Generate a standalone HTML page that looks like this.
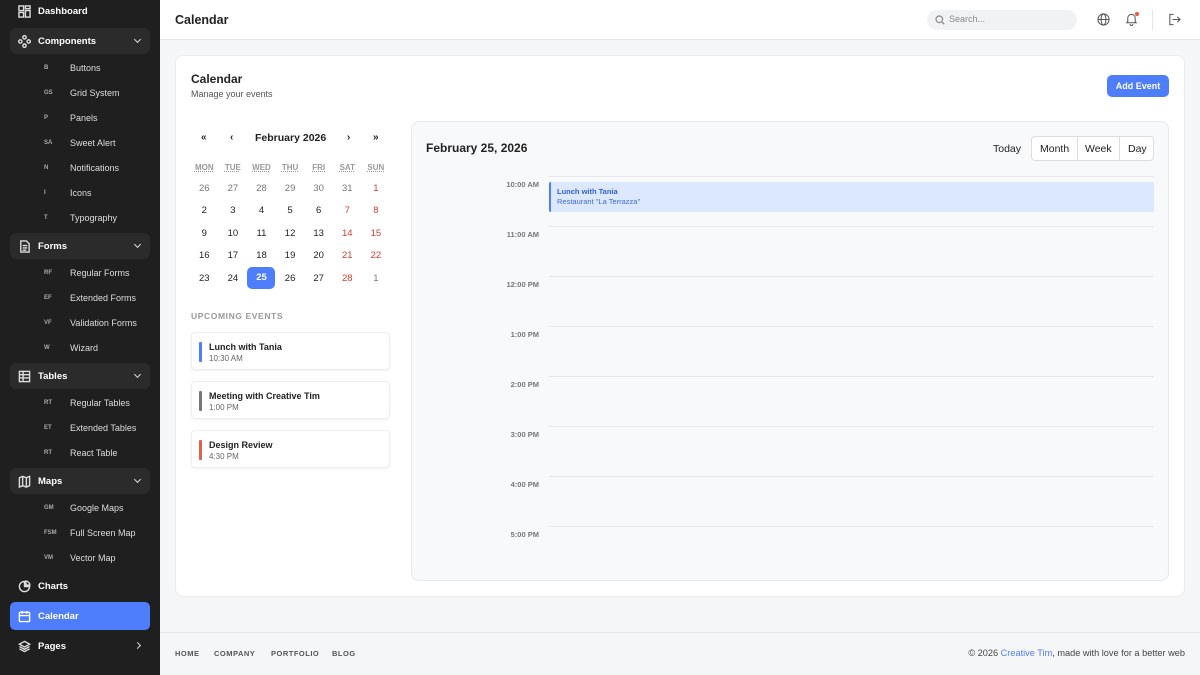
<!DOCTYPE html>
<html><head><meta charset="utf-8"><style>
*{box-sizing:border-box;margin:0;padding:0}
body{width:1200px;height:675px;overflow:hidden;font-family:"Liberation Sans",sans-serif;background:#f5f6f8;position:relative;color:#222}
.a{position:absolute}
#sb{left:0;top:0;width:160px;height:675px;background:#1f1f1f;color:#fff}
.it{position:absolute;left:10px;width:140px;height:26px;font-size:9.5px;font-weight:bold;display:flex;align-items:center;padding-left:8px}
.it svg{width:13px;height:13px;margin-right:7px;stroke:#ddd;fill:none;stroke-width:1.5}
.grp{background:#2b2b2b;border-radius:6px}
.chev{position:absolute;right:10px;top:9px;width:5px;height:5px;border-right:1.3px solid #ddd;border-bottom:1.3px solid #ddd;transform:rotate(45deg)}
.sub{position:absolute;left:0;width:160px;font-size:9px;color:#ddd;height:14px;line-height:14px}
.sub b{position:absolute;left:44px;top:0;line-height:14px;font-size:6px;color:#aaa;width:20px}
.sub span{position:absolute;left:70px;top:0;white-space:nowrap}
#top{left:160px;top:0;width:1040px;height:40px;background:#fff;border-bottom:1px solid #e6e6e6}
.card{left:175px;top:55px;width:1010px;height:542px;background:#fff;border-radius:8px;border:1px solid #ececec}
.cal td{width:28.6px;height:22.5px;text-align:center;font-size:9.5px;color:#222}
.cal th{font-size:8px;color:#999;font-weight:bold;height:20px;text-decoration:underline dotted;}
.cal td.r{color:#d93b2a}.cal td.g{color:#777}
.ev{position:absolute;left:191px;width:199px;height:38px;border:1px solid #eee;border-radius:4px;background:#fff;box-shadow:0 1px 2px rgba(0,0,0,.06)}
.ev i{position:absolute;left:7px;top:9px;width:3px;height:20px;border-radius:1px}
.ev b{position:absolute;left:17px;top:9px;font-size:9px;color:#222}
.ev span{position:absolute;left:17px;top:21px;font-size:8px;color:#666}
.hl{position:absolute;left:549px;width:605px;height:1px;background:#e6e7ea}
.tl{position:absolute;left:470px;width:69px;text-align:right;font-size:7.5px;color:#777;font-weight:bold}
.ft{font-size:7.5px;color:#555;font-weight:bold;letter-spacing:.5px;top:649px}
</style></head><body>
<div id="sb" class="a">
<div class="it" style="top:0;height:22px"><svg viewBox="0 0 14 14"><rect x="1" y="1" width="5" height="5"/><rect x="8" y="1" width="5" height="3"/><rect x="1" y="8" width="5" height="5" /><rect x="8" y="6" width="5" height="7"/></svg>Dashboard</div>
<div class="it grp" style="top:28px"><svg viewBox="0 0 14 14"><circle cx="7" cy="2.5" r="1.8"/><circle cx="2.5" cy="7" r="1.8"/><circle cx="11.5" cy="7" r="1.8"/><circle cx="7" cy="11.5" r="1.8"/></svg>Components<i class="chev"></i></div>
<div class="sub" style="top:61px"><b>B</b><span>Buttons</span></div>
<div class="sub" style="top:86px"><b>GS</b><span>Grid System</span></div>
<div class="sub" style="top:111px"><b>P</b><span>Panels</span></div>
<div class="sub" style="top:136px"><b>SA</b><span>Sweet Alert</span></div>
<div class="sub" style="top:161px"><b>N</b><span>Notifications</span></div>
<div class="sub" style="top:186px"><b>I</b><span>Icons</span></div>
<div class="sub" style="top:211px"><b>T</b><span>Typography</span></div>
<div class="it grp" style="top:233px"><svg viewBox="0 0 14 14"><path d="M3 1h6l3 3v9H3z M5 6h5M5 8.5h5M5 11h4"/></svg>Forms<i class="chev"></i></div>
<div class="sub" style="top:266px"><b>RF</b><span>Regular Forms</span></div>
<div class="sub" style="top:291px"><b>EF</b><span>Extended Forms</span></div>
<div class="sub" style="top:316px"><b>VF</b><span>Validation Forms</span></div>
<div class="sub" style="top:341px"><b>W</b><span>Wizard</span></div>
<div class="it grp" style="top:363px"><svg viewBox="0 0 14 14"><rect x="1.5" y="1.5" width="11" height="11"/><path d="M1.5 5h11M1.5 8.5h11M5.5 1.5v11"/></svg>Tables<i class="chev"></i></div>
<div class="sub" style="top:396px"><b>RT</b><span>Regular Tables</span></div>
<div class="sub" style="top:421px"><b>ET</b><span>Extended Tables</span></div>
<div class="sub" style="top:446px"><b>RT</b><span>React Table</span></div>
<div class="it grp" style="top:468px"><svg viewBox="0 0 14 14"><path d="M1.5 3l3.5-1.5 4 1.5 3.5-1.5v10l-3.5 1.5-4-1.5-3.5 1.5z M5 1.5v10M9 3v10"/></svg>Maps<i class="chev"></i></div>
<div class="sub" style="top:501px"><b>GM</b><span>Google Maps</span></div>
<div class="sub" style="top:526px"><b>FSM</b><span>Full Screen Map</span></div>
<div class="sub" style="top:551px"><b>VM</b><span>Vector Map</span></div>
<div class="it" style="top:573px"><svg viewBox="0 0 14 14"><path d="M7 1.5a5.5 5.5 0 1 0 5.5 5.5H7z M8.5 1.2v4.3h4.3a4.5 4.5 0 0 0-4.3-4.3z"/></svg>Charts</div>
<div class="it" style="top:602px;height:28px;background:#4e7efb;border-radius:5px"><svg viewBox="0 0 14 14" style="stroke:#fff"><rect x="1.5" y="2.5" width="11" height="10" rx="1"/><path d="M1.5 6h11M4.5 1v3M9.5 1v3"/></svg>Calendar</div>
<div class="it" style="top:633px"><svg viewBox="0 0 14 14"><path d="M7 1.5l5.5 3-5.5 3-5.5-3z M1.5 7l5.5 3 5.5-3 M1.5 9.5l5.5 3 5.5-3"/></svg>Pages<i class="chev" style="transform:rotate(-45deg);top:10px"></i></div>
</div>
<div id="top" class="a">
<div class="a" style="left:15px;top:13px;font-size:12.5px;font-weight:bold;color:#222">Calendar</div>
<div class="a" style="left:767px;top:10px;width:150px;height:20px;background:#f1f2f4;border-radius:10px"><svg class="a" style="left:8px;top:5px" width="10" height="10" viewBox="0 0 10 10" fill="none" stroke="#888" stroke-width="1.2"><circle cx="4.3" cy="4.3" r="3.3"/><path d="M6.8 6.8l2.4 2.4"/></svg><span class="a" style="left:22px;top:4px;font-size:9px;color:#888">Search...</span></div>
<svg class="a" style="left:937px;top:13px" width="13" height="13" viewBox="0 0 14 14" fill="none" stroke="#555" stroke-width="1.1"><circle cx="7" cy="7" r="6"/><ellipse cx="7" cy="7" rx="2.6" ry="6"/><path d="M1 7h12"/></svg>
<svg class="a" style="left:965px;top:12px" width="13" height="14" viewBox="0 0 14 14" fill="none" stroke="#555" stroke-width="1.1"><path d="M3 10V6a4 4 0 0 1 8 0v4l1 1H2z M5.5 12.5a1.5 1.5 0 0 0 3 0"/></svg>
<div class="a" style="left:975px;top:12px;width:4px;height:4px;border-radius:2px;background:#e54"></div>
<div class="a" style="left:992px;top:10px;width:1px;height:20px;background:#e5e5e5"></div>
<svg class="a" style="left:1008px;top:13px" width="13" height="13" viewBox="0 0 14 14" fill="none" stroke="#555" stroke-width="1.1"><path d="M6 1.5H2v11h4 M5 7h8 M10 4l3 3-3 3"/></svg>
</div>
<div class="a card"></div>
<div class="a" style="left:191px;top:72px;font-size:12px;font-weight:bold">Calendar</div>
<div class="a" style="left:191px;top:89px;font-size:9px;color:#555">Manage your events</div>
<div class="a" style="left:1107px;top:75px;width:62px;height:22px;background:#4e7efb;border-radius:5px;color:#fff;font-size:9px;font-weight:bold;text-align:center;line-height:22px">Add Event</div>
<div class="a" style="left:191px;top:132px;width:200px;font-size:10px;font-weight:bold">
<span class="a" style="left:10px">«</span><span class="a" style="left:39px">‹</span><span class="a" style="left:64px;font-size:10.5px">February 2026</span><span class="a" style="left:156px">›</span><span class="a" style="left:182px">»</span></div>
<table class="cal a" style="left:190px;top:157px;border-collapse:collapse">
<tr><th>MON</th><th>TUE</th><th>WED</th><th>THU</th><th>FRI</th><th>SAT</th><th>SUN</th></tr>
<tr><td class="g">26</td><td class="g">27</td><td class="g">28</td><td class="g">29</td><td class="g">30</td><td class="g">31</td><td class="r">1</td></tr>
<tr><td>2</td><td>3</td><td>4</td><td>5</td><td>6</td><td class="r">7</td><td class="r">8</td></tr>
<tr><td>9</td><td>10</td><td>11</td><td>12</td><td>13</td><td class="r">14</td><td class="r">15</td></tr>
<tr><td>16</td><td>17</td><td>18</td><td>19</td><td>20</td><td class="r">21</td><td class="r">22</td></tr>
<tr><td>23</td><td>24</td><td><div style="margin:0 auto;width:28px;height:22px;line-height:22px;background:#4e7efb;color:#fff;border-radius:5px;font-weight:bold">25</div></td><td>26</td><td>27</td><td class="r">28</td><td class="g">1</td></tr>
</table>
<div class="a" style="left:191px;top:311px;font-size:8.5px;font-weight:bold;color:#999;letter-spacing:.6px">UPCOMING EVENTS</div>
<div class="ev" style="top:332px"><i style="background:#4e7efb"></i><b>Lunch with Tania</b><span>10:30 AM</span></div>
<div class="ev" style="top:381px"><i style="background:#777"></i><b>Meeting with Creative Tim</b><span>1:00 PM</span></div>
<div class="ev" style="top:430px"><i style="background:#e5604a"></i><b>Design Review</b><span>4:30 PM</span></div>
<div class="a" style="left:411px;top:121px;width:758px;height:460px;background:#f8f9fb;border:1px solid #e8e9ec;border-radius:8px"></div>
<div class="a" style="left:426px;top:141px;font-size:12px;font-weight:bold">February 25, 2026</div>
<div class="a" style="left:993px;top:143px;font-size:10.5px">Today</div>
<div class="a" style="left:1031px;top:136px;width:123px;height:25px;background:#fff;border:1px solid #ddd;border-radius:4px;font-size:10.5px">
<span class="a" style="left:8px;top:6px">Month</span><div class="a" style="left:45px;top:0;width:1px;height:23px;background:#ddd"></div>
<span class="a" style="left:53px;top:6px">Week</span><div class="a" style="left:87px;top:0;width:1px;height:23px;background:#ddd"></div>
<span class="a" style="left:96px;top:6px">Day</span></div>
<div class="hl" style="top:176px"></div><div class="tl" style="top:180px">10:00 AM</div>
<div class="hl" style="top:226px"></div><div class="tl" style="top:230px">11:00 AM</div>
<div class="hl" style="top:276px"></div><div class="tl" style="top:280px">12:00 PM</div>
<div class="hl" style="top:326px"></div><div class="tl" style="top:330px">1:00 PM</div>
<div class="hl" style="top:376px"></div><div class="tl" style="top:380px">2:00 PM</div>
<div class="hl" style="top:426px"></div><div class="tl" style="top:430px">3:00 PM</div>
<div class="hl" style="top:476px"></div><div class="tl" style="top:480px">4:00 PM</div>
<div class="hl" style="top:526px"></div><div class="tl" style="top:530px">5:00 PM</div>
<div class="a" style="left:549px;top:182px;width:605px;height:30px;background:#dce8fd;border-left:2px solid #4e7efb;border-radius:2px">
<span class="a" style="left:6px;top:5px;font-size:7.5px;font-weight:bold;color:#2f5fd8">Lunch with Tania</span>
<span class="a" style="left:6px;top:15px;font-size:7.5px;color:#3b6be0">Restaurant "La Terrazza"</span></div>
<div class="a" style="left:160px;top:632px;width:1040px;height:1px;background:#e5e5e5"></div>
<div class="a ft" style="left:175px">HOME</div><div class="a ft" style="left:214px">COMPANY</div><div class="a ft" style="left:271px">PORTFOLIO</div><div class="a ft" style="left:332px">BLOG</div>
<div class="a" style="right:15px;top:648px;font-size:9.2px;color:#444;white-space:nowrap">© 2026 <span style="color:#4e7efb">Creative Tim</span>, made with love for a better web</div>
</body></html>
